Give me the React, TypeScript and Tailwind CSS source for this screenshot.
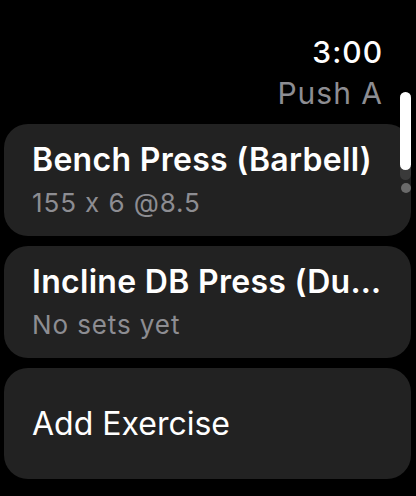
const font = { fontFamily: 'Inter, "Noto Sans", sans-serif', fontFeatureSettings: '"calt" 0' };

type Exercise = { name: string; detail: string };

const EXERCISES: Exercise[] = [
  { name: 'Bench Press (Barbell)', detail: '155 x 6 @8.5' },
  { name: 'Incline DB Press (Dumbbell)', detail: 'No sets yet' },
];

const ExerciseCard = ({ exercise }: { exercise: Exercise }) => (
  <button className="w-full text-left rounded-[24px] bg-[#222222] pl-[28px] pr-[22px] pt-[18px] pb-[17px]">
    <div className="text-[32px] leading-[36px] font-semibold tracking-[0.3px] text-white truncate">{exercise.name}</div>
    <div className="mt-[9px] text-[26px] leading-[32px] tracking-[0.9px] text-[#8d8d92] truncate">{exercise.detail}</div>
  </button>
);

export default function App() {
  return (
    <div className="relative w-[416px] h-[496px] bg-black overflow-hidden" style={font}>
      <div className="flex flex-col items-end pr-[33px] pt-[35px]">
        <div className="text-[30px] leading-[34px] font-medium tracking-[1px] text-white">3:00</div>
        <div className="mt-[7px] text-[30px] leading-[34px] tracking-[1px] text-[#8d8d92]">Push A</div>
      </div>

      <div className="flex flex-col gap-[10px] pl-[4px] pr-[5px] mt-[14px]">
        {EXERCISES.map((exercise) => (
          <ExerciseCard key={exercise.name} exercise={exercise} />
        ))}
        <button className="w-full h-[111px] flex items-center text-left rounded-[24px] bg-[#222222] pl-[28px] pr-[22px]">
          <span className="text-[32px] leading-[36px] text-white">Add Exercise</span>
        </button>
      </div>

      {/* scroll indicator */}
      <div className="absolute left-[400px] top-[92px] w-[11px] flex flex-col items-center">
        <div className="relative w-[11px] h-[88px]">
          <div className="absolute inset-0 rounded-full bg-[#3a3a3a]" />
          <div className="absolute left-0 top-0 w-[11px] h-[78px] rounded-full bg-white" />
        </div>
        <div className="mt-[3px] size-[10px] rounded-full bg-[#6a6a6a]" />
      </div>
    </div>
  );
}
